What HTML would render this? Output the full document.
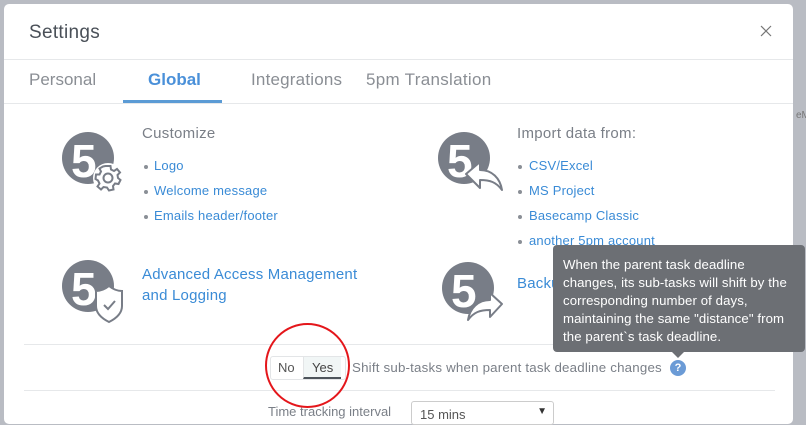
<!DOCTYPE html>
<html><head><meta charset="utf-8"><style>
*{margin:0;padding:0;box-sizing:border-box}
body{width:806px;height:415px;overflow:hidden;background:#b9bcc3;font-family:"Liberation Sans",sans-serif;position:relative}
.modal{position:absolute;left:4px;top:4px;width:789px;height:420px;background:#fff;border-radius:5px}
.a{position:absolute;white-space:nowrap}
.link{color:#3a8bd6;font-size:13px;letter-spacing:0.2px}
.dot{position:absolute;width:4px;height:4px;border-radius:2px;background:#8a8f96}
.gray{color:#7a7f87}
.hl{position:absolute;height:1px;background:#e6e8ea}
</style></head><body>
<div class="a" style="left:796px;top:110px;font-size:10px;color:#777">eM</div>
<div class="modal"></div>
<div class="a" style="left:29px;top:22px;font-size:19px;color:#4a5058;letter-spacing:0.3px">Settings</div>
<svg class="a" style="left:760px;top:25px" width="12" height="12"><path d="M1 1L11 11M11 1L1 11" stroke="#777" stroke-width="1.2"/></svg>
<div class="hl" style="left:4px;top:59px;width:789px"></div>
<div class="a gray" style="left:29px;top:70px;font-size:17px;color:#8a8e94">Personal</div>
<div class="a" style="left:148px;top:70px;font-size:17px;color:#4a90d9;font-weight:bold">Global</div>
<div class="a" style="left:251px;top:70px;font-size:17px;color:#8a8e94;letter-spacing:0.2px">Integrations</div>
<div class="a" style="left:366px;top:70px;font-size:17px;color:#8a8e94;letter-spacing:0.3px">5pm Translation</div>
<div class="a" style="left:123px;top:100px;width:99px;height:3px;background:#5b9bd5"></div>
<div class="hl" style="left:4px;top:103px;width:789px"></div>

<svg class="a" style="left:60px;top:130px" width="70" height="65">
<circle cx="28" cy="28" r="26" fill="#787d87"/>
<text x="11" y="47" font-family="Liberation Sans" font-weight="bold" font-size="46" fill="#fff">5</text>
<circle cx="48" cy="48" r="15" fill="#fff"/>
<g transform="translate(48,48)" fill="none" stroke="#787d87" stroke-width="2">
<path d="M-2.5 -12 L2.5 -12 L3 -8.5 L6 -7 L9 -9 L12 -5.5 L9.5 -3 L10 0 L12.5 2 L10.5 6 L7 5.5 L5 8 L5.5 11.5 L1 12.5 L-1 9.5 L-4.5 9 L-7 11.5 L-10.5 8.5 L-8.5 5.5 L-10 2.5 L-12.5 1 L-12 -3.5 L-8.5 -3.5 L-7 -6.5 L-8.5 -9.5 L-5 -11.5 Z"/>
<circle r="4.5"/></g>
</svg>
<div class="a gray" style="left:142px;top:125px;font-size:15px;letter-spacing:0.3px">Customize</div>
<div class="dot" style="left:144px;top:165px"></div><div class="a link" style="left:154px;top:158px">Logo</div>
<div class="dot" style="left:144px;top:190px"></div><div class="a link" style="left:154px;top:183px">Welcome message</div>
<div class="dot" style="left:144px;top:215px"></div><div class="a link" style="left:154px;top:208px">Emails header/footer</div>

<svg class="a" style="left:436px;top:130px" width="70" height="65">
<circle cx="28" cy="28" r="26" fill="#787d87"/>
<text x="11" y="47" font-family="Liberation Sans" font-weight="bold" font-size="46" fill="#fff">5</text>
<path d="M30 44 L44 32 L44 40 C56 40 64 48 66 60 C60 52 54 50 44 50 L44 58 Z" fill="#fff" stroke="#787d87" stroke-width="2" stroke-linejoin="round"/>
</svg>
<div class="a gray" style="left:517px;top:125px;font-size:15px;letter-spacing:0.3px">Import data from:</div>
<div class="dot" style="left:518px;top:165px"></div><div class="a link" style="left:529px;top:158px">CSV/Excel</div>
<div class="dot" style="left:518px;top:190px"></div><div class="a link" style="left:529px;top:183px">MS Project</div>
<div class="dot" style="left:518px;top:215px"></div><div class="a link" style="left:529px;top:208px">Basecamp Classic</div>
<div class="dot" style="left:518px;top:240px"></div><div class="a link" style="left:529px;top:233px">another 5pm account</div>

<svg class="a" style="left:60px;top:260px" width="70" height="65">
<circle cx="28" cy="26" r="26" fill="#787d87"/>
<text x="11" y="45" font-family="Liberation Sans" font-weight="bold" font-size="46" fill="#fff">5</text>
<path d="M49 26 C44 30 40 31 36 31 L36 46 C36 54 43 59 49 62 C55 59 62 54 62 46 L62 31 C58 31 54 30 49 26 Z" fill="#fff" stroke="#787d87" stroke-width="2"/>
<path d="M44 45 L48 49 L55 41" fill="none" stroke="#787d87" stroke-width="2"/>
</svg>
<div class="a link" style="left:142px;top:264px;font-size:15px;line-height:21px;letter-spacing:0.2px">Advanced Access Management<br>and Logging</div>

<svg class="a" style="left:440px;top:260px" width="70" height="65">
<circle cx="28" cy="28" r="26" fill="#787d87"/>
<text x="11" y="47" font-family="Liberation Sans" font-weight="bold" font-size="46" fill="#fff">5</text>
<path d="M62 44 L50 33 L50 40 C38 40 30 48 28 60 C34 52 40 50 50 50 L50 57 Z" fill="#fff" stroke="#787d87" stroke-width="2" stroke-linejoin="round"/>
</svg>
<div class="a link" style="left:517px;top:275px;font-size:15px">Backup</div>

<div class="hl" style="left:24px;top:344px;width:751px"></div>
<div class="a" style="left:270px;top:356px;width:76px;height:24px;border:1px solid #e3e5e7;border-radius:3px"></div>
<div class="a gray" style="left:278px;top:360px;font-size:13px;color:#555">No</div>
<div class="a" style="left:303px;top:357px;width:38px;height:22px;background:#f1f6f6;border-bottom:2px solid #4d545b;border-left:1px solid #e3e5e7"></div>
<div class="a" style="left:312px;top:360px;font-size:13px;color:#444">Yes</div>
<div class="a gray" style="left:352px;top:360px;font-size:13.3px;letter-spacing:0.2px">Shift sub-tasks when parent task deadline changes</div>
<div class="a" style="left:670px;top:360px;width:16px;height:16px;border-radius:8px;background:#6b9bd6;color:#fff;font-size:11px;font-weight:bold;text-align:center;line-height:16px">?</div>
<div class="hl" style="left:24px;top:390px;width:751px"></div>
<div class="a gray" style="left:268px;top:404px;font-size:13px">Time tracking interval</div>
<div class="a" style="left:411px;top:401px;width:143px;height:24px;border:1px solid #ccc;border-radius:3px;font-size:13px;color:#555;padding:5px 8px">15 mins<span style="position:absolute;right:6px;top:4px;font-size:10px;color:#333">▼</span></div>

<div class="a" style="left:265px;top:323px;width:85px;height:85px;border:2px solid #e4161b;border-radius:50%"></div>

<div class="a" style="left:553px;top:245px;width:252px;height:107px;background:#6c6f74;border-radius:4px;color:#fff;font-size:13.2px;letter-spacing:0.1px;line-height:18px;padding:11px 0 0 10px;white-space:nowrap">When the parent task deadline<br>changes, its sub-tasks will shift by the<br>corresponding number of days,<br>maintaining the same "distance" from<br>the parent`s task deadline.</div>
<div class="a" style="left:672px;top:352px;width:0;height:0;border-left:6px solid transparent;border-right:6px solid transparent;border-top:6px solid #6c6f74"></div>
</body></html>
